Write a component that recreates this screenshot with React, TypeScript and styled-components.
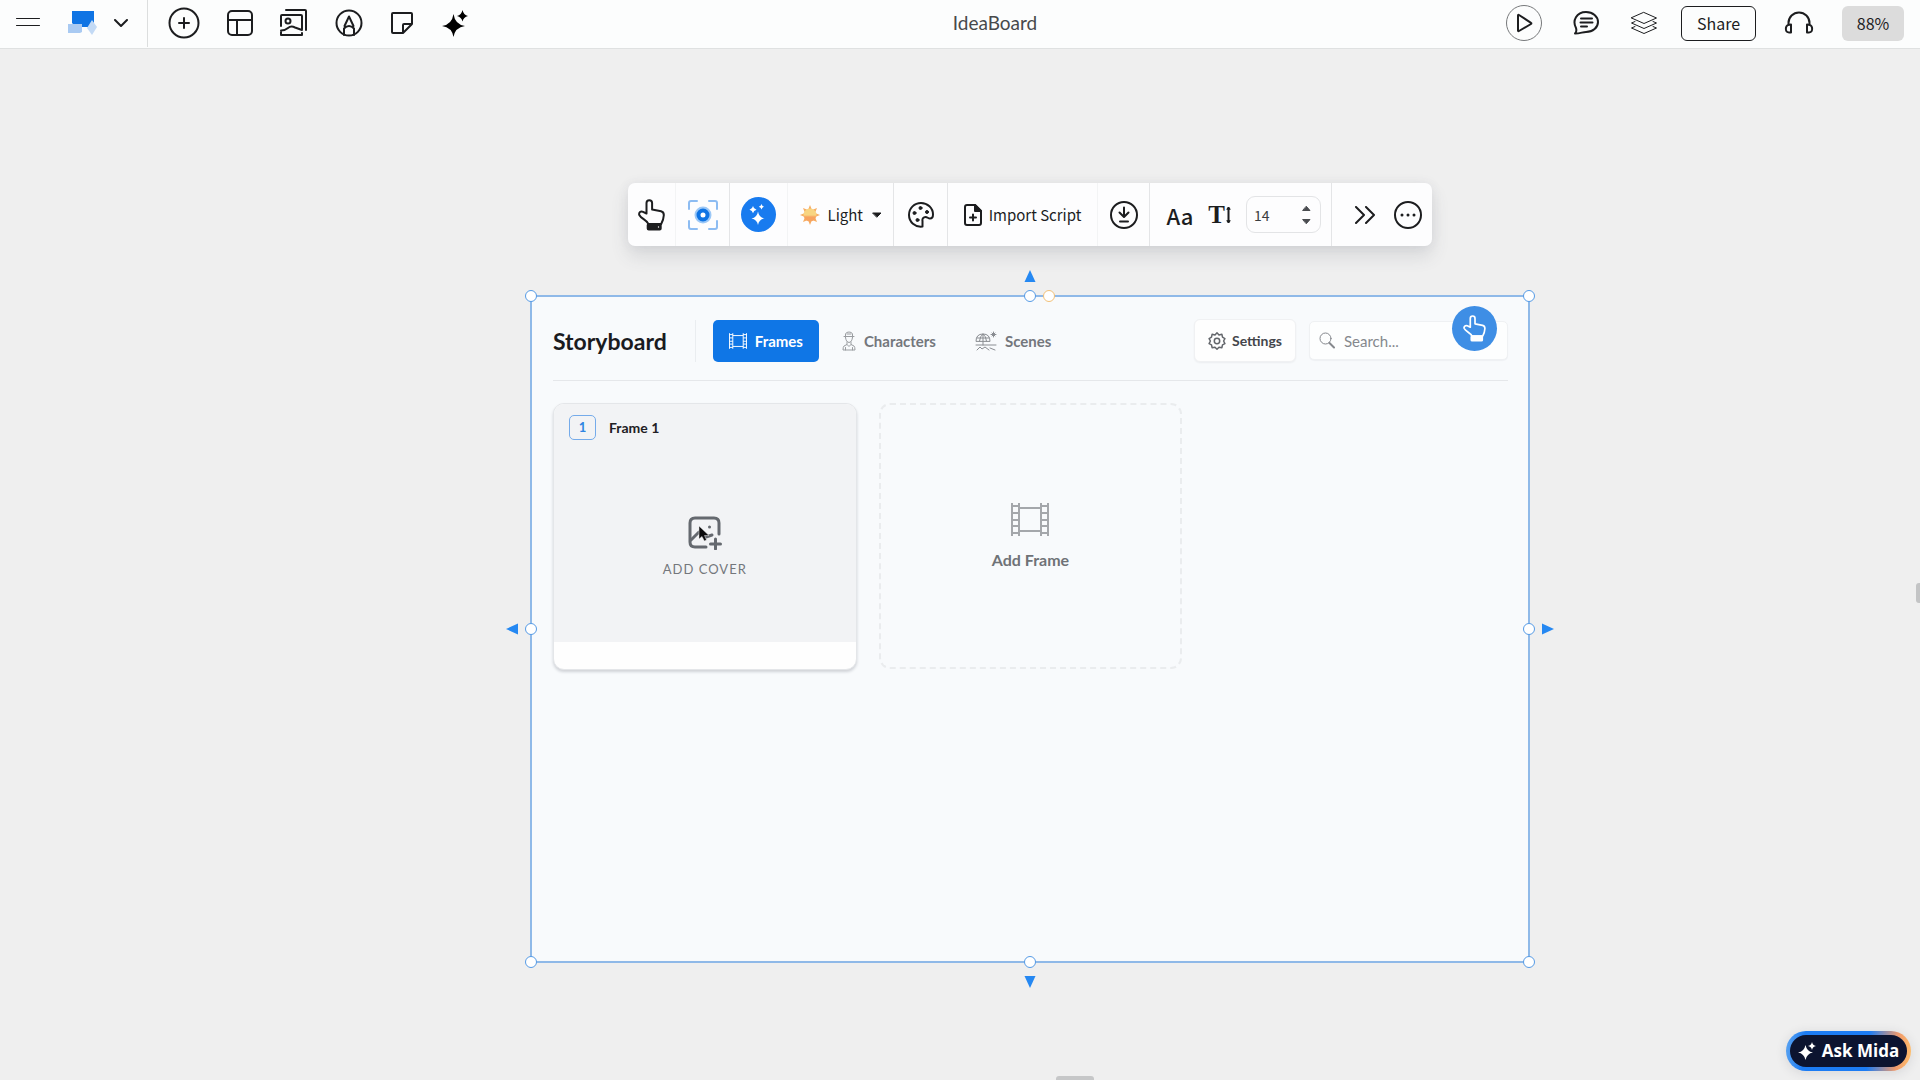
import React, { useState } from "react";
import styled, { createGlobalStyle } from "styled-components";

const uiFont = `"Noto Sans CJK SC", "Noto Sans", sans-serif`;
const boardFont = `Lato, "Open Sans", sans-serif`;

const GlobalStyle = createGlobalStyle`
  * {
    box-sizing: border-box;
  }
  body {
    margin: 0;
    background: #efefef;
    color: #1c1d1f;
    font-family: ${uiFont};
  }
  button, input, select {
    font: inherit;
    color: inherit;
  }
`;

const Page = styled.div`
  display: flex;
  flex-direction: column;
  height: 100vh;
  overflow: hidden;
`;

const TopBar = styled.header`
  display: flex;
  align-items: center;
  height: 49px;
  padding: 0 16px 2px 14px;
  background: #fcfdfd;
  border-bottom: 1px solid #dfe1e1;
`;

const BarSide = styled.div<{ $end?: boolean }>`
  display: flex;
  flex: 1;
  align-items: center;
  justify-content: ${(p) => (p.$end ? "flex-end" : "flex-start")};
  gap: ${(p) => (p.$end ? 23 : 20)}px;
`;

const BarGroup = styled.div<{ $gap: number }>`
  display: flex;
  align-items: center;
  gap: ${(p) => p.$gap}px;
`;

const BrandGroup = styled(BarGroup)`
  height: 48px;
  padding-right: 19px;
  border-right: 1px solid #dcdede;
`;

const IconButton = styled.button`
  display: flex;
  align-items: center;
  justify-content: center;
  flex: none;
  padding: 0;
  border: 0;
  background: none;
  cursor: pointer;
`;

const MenuButton = styled(IconButton)`
  justify-content: flex-start;
  width: 38px;
`;

const BoardTitle = styled.h1`
  margin: 0 0 0 72px;
  font-family: ${boardFont};
  font-size: 19px;
  font-weight: 400;
  line-height: 24px;
  color: #47494b;
`;

const PlayButton = styled(IconButton)`
  width: 36px;
  height: 36px;
  border: 1px solid #77797b;
  border-radius: 50%;
`;

const ShareButton = styled.button`
  width: 75px;
  height: 35px;
  padding: 0;
  border: 1px solid #1c1d1f;
  border-radius: 6px;
  background: #fcfdfd;
  font-size: 16px;
  line-height: 24px;
`;

const ZoomButton = styled.button`
  width: 62px;
  height: 35px;
  padding: 0;
  border: 0;
  border-radius: 6px;
  background: #dcdcdc;
  font-size: 16px;
  line-height: 24px;
`;

const Canvas = styled.main`
  position: relative;
  flex: 1;
  background: #efefef;
`;

const CanvasNode = styled.section`
  position: absolute;
  left: 530px;
  top: 134px;
  width: 1000px;
  display: flex;
  flex-direction: column;
  align-items: center;
  gap: 49px;
`;

const Toolbar = styled.div`
  display: flex;
  height: 63px;
  border-radius: 7px;
  background: #fdfdfe;
  box-shadow: 0 10px 18px rgba(70, 75, 95, 0.14), 0 0 12px rgba(70, 75, 95, 0.07);
`;

const ToolGroup = styled.div<{ $width: number; $gap?: number; $faint?: boolean; $end?: boolean }>`
  display: flex;
  align-items: center;
  justify-content: ${(p) => (p.$end ? "flex-end" : "center")};
  gap: ${(p) => p.$gap ?? 0}px;
  width: ${(p) => p.$width}px;
  padding-right: ${(p) => (p.$end ? 10 : 0)}px;
  border-right: 1px solid ${(p) => (p.$faint ? "#f3f4f5" : "#e4e5e7")};

  &:last-child {
    border-right: 0;
  }
`;

const AiButton = styled(IconButton)`
  width: 35px;
  height: 35px;
  border-radius: 50%;
  background: #187bef;
`;

const ThemeLabel = styled.label`
  display: flex;
  align-items: center;
  gap: 8px;
  font-size: 15px;
`;

const ThemeSelect = styled.select`
  appearance: none;
  width: 36px;
  padding: 0;
  border: 0;
  background: none;
  line-height: 24px;
`;

const ToolTextButton = styled(IconButton)`
  gap: 7px;
  font-size: 15px;
  line-height: 24px;
`;

const FontButton = styled(IconButton)`
  font-size: 22px;
  font-weight: 500;
  line-height: 28px;
`;

const SizeButton = styled(IconButton)`
  gap: 1px;
  font-family: "Liberation Serif", serif;
  font-size: 25px;
  font-weight: 700;
  line-height: 28px;
`;

const SizeField = styled.div`
  display: flex;
  align-items: center;
  justify-content: space-between;
  width: 75px;
  height: 37px;
  padding: 0 9px 0 7px;
  border: 1px solid #e3e4e6;
  border-radius: 9px;
`;

const SizeInput = styled.input`
  width: 36px;
  padding: 0;
  border: 0;
  outline: 0;
  background: none;
  font-size: 14px;
  line-height: 20px;
  color: #3b3d40;
`;

const Stepper = styled.div`
  display: flex;
  flex-direction: column;
  gap: 8px;
  color: #4a4c50;
`;

const Widget = styled.div`
  position: relative;
  width: 100%;
  height: 668px;
  padding: 22px 20px 22px 21px;
  border: 2px solid #8fb9e8;
  background: #f8fafc;
  font-family: ${boardFont};
`;

const WidgetHeader = styled.div`
  display: flex;
  align-items: center;
  justify-content: space-between;
  padding-bottom: 18px;
  border-bottom: 1px solid #e5e7ea;
`;

const WidgetTitle = styled.h2`
  margin: 0;
  padding-right: 28px;
  border-right: 1px solid #eaedf0;
  font-size: 23px;
  font-weight: 700;
  line-height: 42px;
  color: #1a1b1f;
`;

const Tabs = styled.nav`
  display: flex;
  align-items: center;
  gap: 7px;
  flex: 1;
  margin-left: 17px;
`;

const Tab = styled.button<{ $active?: boolean }>`
  display: flex;
  align-items: center;
  gap: 8px;
  height: 42px;
  padding: 0 16px;
  border: 0;
  border-radius: 5px;
  background: ${(p) => (p.$active ? "#0f76e6" : "transparent")};
  color: ${(p) => (p.$active ? "#ffffff" : "#74777c")};
  font-size: 15px;
  font-weight: 700;
  line-height: 20px;
`;

const SettingsButton = styled.button`
  display: flex;
  align-items: center;
  justify-content: center;
  gap: 6px;
  width: 102px;
  height: 43px;
  padding: 0;
  border: 1px solid #f0f1f3;
  border-radius: 6px;
  background: #fefefe;
  box-shadow: 0 1px 2px rgba(30, 35, 50, 0.06);
  font-size: 14px;
  font-weight: 700;
  line-height: 20px;
  color: #44464b;
`;

const SearchLabel = styled.label`
  display: flex;
  align-items: center;
  gap: 9px;
  width: 199px;
  height: 39px;
  margin-left: 13px;
  padding: 0 9px;
  border: 1px solid #eff1f3;
  border-radius: 5px;
  background: #fdfefe;
  box-shadow: 0 1px 1px rgba(30, 35, 50, 0.04);
`;

const SearchInput = styled.input`
  flex: 1;
  min-width: 0;
  padding: 0;
  border: 0;
  outline: 0;
  background: none;
  font-size: 15px;
  line-height: 20px;

  &::placeholder {
    color: #85888d;
    opacity: 1;
  }
`;

const HandBadge = styled(IconButton)`
  position: absolute;
  right: 31px;
  top: 9px;
  width: 45px;
  height: 45px;
  border-radius: 50%;
  background: #3e8ee5;
  color: #ffffff;
`;

const Cards = styled.div`
  display: grid;
  grid-template-columns: repeat(3, 1fr);
  gap: 22px;
  padding-top: 22px;
`;

const FrameCard = styled.article`
  display: flex;
  flex-direction: column;
  height: 267px;
  overflow: hidden;
  border: 1px solid #e4e6e9;
  border-radius: 11px;
  background: #fefefe;
  box-shadow: 0 2px 3px rgba(30, 35, 50, 0.18);
`;

const Cover = styled.div`
  display: flex;
  flex-direction: column;
  height: 238px;
  padding: 11px 15px;
  background: #f2f3f5;
`;

const FrameHead = styled.div`
  display: flex;
  align-items: center;
  gap: 13px;
`;

const FrameNumber = styled.span`
  width: 27px;
  height: 25px;
  border: 1px solid #75abea;
  border-radius: 5px;
  text-align: center;
  font-size: 13px;
  font-weight: 700;
  line-height: 22px;
  color: #2f85e2;
`;

const FrameName = styled.h3`
  margin: 0;
  font-size: 14px;
  font-weight: 700;
  line-height: 20px;
  color: #1f2024;
`;

const AddCover = styled.button`
  position: relative;
  display: flex;
  flex: 1;
  flex-direction: column;
  align-items: center;
  gap: 9px;
  padding: 76px 0 0;
  border: 0;
  background: none;
  font-size: 13px;
  letter-spacing: 1px;
  line-height: 20px;
  color: #74777c;
`;

const Pointer = styled.svg`
  position: absolute;
  left: calc(50% - 7px);
  top: 85px;
`;

const AddFrame = styled.button`
  display: flex;
  flex-direction: column;
  align-items: center;
  justify-content: center;
  gap: 14px;
  height: 266px;
  padding: 0;
  border: 2px dashed #eaecee;
  border-radius: 11px;
  background: none;
  font-size: 16px;
  font-weight: 700;
  line-height: 20px;
  color: #6f7277;
`;

const Handle = styled.span<{ $x: string; $y: string; $warm?: boolean }>`
  position: absolute;
  left: ${(p) => p.$x};
  top: ${(p) => p.$y};
  width: 12px;
  height: 12px;
  margin: -6px;
  border: 1px solid ${(p) => (p.$warm ? "#f2c179" : "#569be6")};
  border-radius: 50%;
  background: #ffffff;
`;

const Arrow = styled.svg<{ $x: string; $y: string; $turn: number }>`
  position: absolute;
  left: ${(p) => p.$x};
  top: ${(p) => p.$y};
  width: 12px;
  height: 12px;
  margin: -6px;
  transform: rotate(${(p) => p.$turn}deg);
  fill: #2588f2;
`;

const SideStub = styled.span`
  position: absolute;
  right: 0;
  top: 534px;
  width: 4px;
  height: 20px;
  border-radius: 3px 0 0 3px;
  background: #c3c4c5;
`;

const BottomStub = styled.span`
  position: absolute;
  left: 55%;
  bottom: 0;
  width: 38px;
  height: 4px;
  border-radius: 3px 3px 0 0;
  background: #c6c7c8;
`;

const AskMida = styled.button`
  position: absolute;
  right: 9px;
  bottom: 9px;
  display: flex;
  align-items: center;
  justify-content: center;
  gap: 6px;
  width: 125px;
  height: 40px;
  padding: 0;
  border: 4px solid transparent;
  border-radius: 20px;
  background: linear-gradient(#0c1430, #0c1430) padding-box,
    linear-gradient(95deg, #5ca4f0 0%, #1c7cf4 15%, #1c7cf4 65%, #f09a6c 88%, #ffc06a 100%) border-box;
  box-shadow: 0 2px 12px rgba(40, 45, 60, 0.12);
  font-family: "Open Sans", sans-serif;
  font-size: 17px;
  font-weight: 700;
  line-height: 24px;
  color: #ffffff;
`;

type IconProps = {
  w: number;
  h: number;
  sw?: number;
  color?: string;
  children: React.ReactNode;
};

const Icon: React.FC<IconProps> = ({ w, h, sw = 2, color = "currentColor", children }) => (
  <svg
    width={w}
    height={h}
    viewBox={`0 0 ${w} ${h}`}
    fill="none"
    stroke={color}
    strokeWidth={sw}
    strokeLinecap="round"
    strokeLinejoin="round"
    aria-hidden="true"
  >
    {children}
  </svg>
);

const HandIcon = ({ w = 27, h = 32 }) => (
  <svg width={w} height={h} viewBox="0 0 27 32" fill="none" stroke="currentColor" strokeWidth="2" strokeLinejoin="round">
    <path d="M8.5 13V4a2.8 2.8 0 0 1 5.6 0v6.5l9 1.8q2.900.8 2.700 4-.2 4.500-2.600 8.700H10.500C9 21 3 19.500 1.300 16c-.8-2.500 1.500-4.200 3.700-3.200l3.500 1.700z" />
    <rect x="9.700" y="25" width="13" height="5.500" rx="1" fill="currentColor" />
    <circle cx="20.500" cy="28" r="0.700" fill="#fff" stroke="none" />
  </svg>
);

const FilmIcon: React.FC<{ w: number; h: number; color?: string }> = ({ w, h, color = "currentColor" }) => (
  <svg width={w} height={h} viewBox="0 0 38 33" fill="none" stroke={color} strokeWidth="2">
    <path d="M1 0v33M8 0v33M30 0v33M37 0v33M8 5h22M8 28h22" />
    <path d="M1 3h7M1 10h7M1 17h7M1 23h7M1 30h7M30 3h7M30 10h7M30 17h7M30 23h7M30 30h7" />
  </svg>
);

const LeftTools: React.FC = () => (
  <BarSide>
    <BrandGroup $gap={16}>
      <MenuButton aria-label="Menu">
        <Icon w={28} h={14} sw={1}>
          <path d="M2.5 2.5h23M2.5 9.5h23" />
        </Icon>
      </MenuButton>
      <IconButton aria-label="Home">
        <Icon w={30} h={24} sw={0}>
          <path d="M4 0h22v16H8l-4-4z" fill="#0f74e4" />
          <path d="M0 13h14v8l-2 1H0z" fill="#a9caf2" />
          <path d="m24 9 5 7-5 8-5-7z" fill="#c3daf5" />
        </Icon>
      </IconButton>
      <IconButton aria-label="Boards">
        <Icon w={14} h={9}>
          <path d="m1 1 6 6 6-6" />
        </Icon>
      </IconButton>
    </BrandGroup>
    <BarGroup $gap={27}>
      <IconButton aria-label="Add">
        <Icon w={32} h={32}>
          <circle cx="16" cy="16" r="14.5" />
          <path d="M16 11v10M11 16h10" />
        </Icon>
      </IconButton>
      <IconButton aria-label="Templates">
        <Icon w={26} h={26}>
          <rect x="1" y="1" width="24" height="24" rx="4" />
          <path d="M1 10h24M10 10v15" />
        </Icon>
      </IconButton>
      <IconButton aria-label="Images">
        <Icon w={28} h={28}>
          <path d="M1 17V7q0-1 1-1h19q1 0 1 1v13" />
          <path d="M6 1h19q1 0 1 1v19" />
          <path d="M1 21.500q4 0 7-2.500t7-.5l7 2.500M1 23v3h21v-2" />
          <circle cx="8" cy="12" r="2.5" />
        </Icon>
      </IconButton>
      <IconButton aria-label="Draw">
        <Icon w={28} h={28}>
          <circle cx="14" cy="14" r="12.5" />
          <path d="m9.500 17 4.500-9.500 4.500 9.500M9 26v-6.500q5-5 10 0V26" />
        </Icon>
      </IconButton>
      <IconButton aria-label="Sticky note">
        <Icon w={24} h={24}>
          <path d="M12 22H3q-1 0-1-1V3q0-1 1-1h18q1 0 1 1v10l-9 9v-8q0-1 1-1h8" />
        </Icon>
      </IconButton>
      <IconButton aria-label="AI">
        <Icon w={28} h={28} sw={0}>
          <path
            fill="#000"
            d="M12.5 5Q14 15.500 24 17 14 18.500 12.500 28 11 18.500 1 17 11 15.500 12.500 5zM21.500 1q1 5 5.500 6-4.500 1-5.500 5.500-1-4.500-5.500-5.500 4.500-1 5.500-6z"
          />
        </Icon>
      </IconButton>
    </BarGroup>
  </BarSide>
);

const RightTools: React.FC = () => (
  <BarSide $end>
    <BarGroup $gap={30}>
      <PlayButton aria-label="Present">
        <Icon w={18} h={20}>
          <path d="M3 2.500v15c0 .6.500.8 1 .5l12-7c.5-.3.500-.9 0-1.200L4 2c-.5-.3-1 0-1 .5z" />
        </Icon>
      </PlayButton>
      <IconButton aria-label="Comments">
        <Icon w={28} h={26}>
          <path d="M4 18C0 10.500 4.500 2 14 2c7 0 12 4.500 12 10s-5 10-12 10c-3.500 0-5.500 1.500-11 1.500 1.500-1.500 1.600-3.500 1-5.500z" />
          <path d="M9 8.500h11M8.500 12.500h12M9 16.500h6" />
        </Icon>
      </IconButton>
      <IconButton aria-label="Layers">
        <Icon w={28} h={24} sw={1}>
          <path d="M14 1.500 26.500 7 14 12.500 1.500 7z" />
          <path d="M5 10.500 1.500 12 14 17.500 26.500 12 23 10.500M5 15.500 1.500 17 14 22.500 26.500 17 23 15.500" />
        </Icon>
      </IconButton>
    </BarGroup>
    <BarGroup $gap={28}>
      <ShareButton>Share</ShareButton>
      <IconButton aria-label="Audio">
        <Icon w={30} h={24}>
          <path d="M4.500 13V12a10.500 10.500 0 0 1 21 0v1" />
          <path d="M7 13.500v8H5c-3 0-3.500-2.500-3-5s2-3 5-3zM23 13.500v8h2c3 0 3.500-2.500 3-5s-2-3-5-3z" />
        </Icon>
      </IconButton>
      <ZoomButton>88%</ZoomButton>
    </BarGroup>
  </BarSide>
);

const handles = [
  ["-1px", "-1px"],
  ["50%", "-1px"],
  ["calc(100% + 1px)", "-1px"],
  ["-1px", "50%"],
  ["calc(100% + 1px)", "50%"],
  ["-1px", "calc(100% + 1px)"],
  ["50%", "calc(100% + 1px)"],
  ["calc(100% + 1px)", "calc(100% + 1px)"],
];

const arrows = [
  { x: "50%", y: "-21px", turn: 0 },
  { x: "50%", y: "calc(100% + 21px)", turn: 180 },
  { x: "-20px", y: "50%", turn: 270 },
  { x: "calc(100% + 20px)", y: "50%", turn: 90 },
];

const App: React.FC = () => {
  const [fontSize, setFontSize] = useState(14);
  const [tab, setTab] = useState("Frames");

  return (
    <Page>
      <GlobalStyle />
      <TopBar>
        <LeftTools />
        <BoardTitle>IdeaBoard</BoardTitle>
        <RightTools />
      </TopBar>

      <Canvas>
        <CanvasNode>
          <Toolbar role="toolbar" aria-label="Storyboard tools">
            <ToolGroup $width={48} $faint>
              <IconButton aria-label="Interact">
                <HandIcon />
              </IconButton>
            </ToolGroup>
            <ToolGroup $width={54}>
              <IconButton aria-label="Focus">
                <Icon w={30} h={30} color="#8dbcf2">
                  <path d="M1 9V3q0-2 2-2h6M21 1h6q2 0 2 2v6M29 21v6q0 2-2 2h-6M9 29H3q-2 0-2-2v-6" />
                  <circle cx="15" cy="15" r="8.5" fill="#9cc8f7" stroke="none" />
                  <circle cx="15" cy="15" r="4.5" fill="#fff" stroke="#0f74e4" strokeWidth="4" />
                </Icon>
              </IconButton>
            </ToolGroup>
            <ToolGroup $width={58} $faint>
              <AiButton aria-label="AI actions">
                <Icon w={35} h={35} sw={0}>
                  <path
                    fill="#fff"
                    d="M17 14.500q1 6 6.500 7-5.500 1-6.500 6.500-1-5.500-6.500-6.500 5.500-1 6.500-7zM12 9q.6 3 3.500 3.700-2.900.6-3.500 3.500-.6-2.900-3.500-3.500Q11.400 12 12 9zM20.500 7q.5 2.300 2.700 2.800-2.200.5-2.700 2.700-.5-2.200-2.700-2.700 2.200-.5 2.700-2.800z"
                  />
                </Icon>
              </AiButton>
            </ToolGroup>
            <ToolGroup $width={106}>
              <ThemeLabel>
                <Icon w={20} h={20} sw={0}>
                  <defs>
                    <linearGradient id="sun" gradientUnits="userSpaceOnUse" x1="0" y1="0" x2="0" y2="20">
                      <stop offset="0.5" stopColor="#f8d581" />
                      <stop offset="0.6" stopColor="#f7a35f" />
                    </linearGradient>
                  </defs>
                  <path fill="#f7ad62" d="m10 0 2 5h-4zM10 20l2-5h-4zM0 10l5-2v4zM20 10l-5-2v4zM3 3l5 2-3 3zM17 3l-5 2 3 3zM3 17l5-2-3-3zM17 17l-5-2 3-3z" />
                  <circle cx="10" cy="10" r="6.5" fill="url(#sun)" />
                </Icon>
                <ThemeSelect aria-label="Theme" defaultValue="Light">
                  <option>Light</option>
                  <option>Dark</option>
                </ThemeSelect>
                <Icon w={10} h={6} sw={1}>
                  <path d="M1 1h8L5 5z" fill="currentColor" />
                </Icon>
              </ThemeLabel>
            </ToolGroup>
            <ToolGroup $width={54}>
              <IconButton aria-label="Colors">
                <Icon w={26} h={26}>
                  <path d="M14.500 24.500C7 25.500 1 20 1 13S6.500 1 13 1s12 5 12 11.500c0 3-1.500 4-3 4-2 0-2.500-1.500-4.500-1.500s-3.500 1.700-3 4z" />
                  <circle cx="6.5" cy="11" r="1.5" fill="currentColor" strokeWidth="1" />
                  <circle cx="12.5" cy="6" r="1.5" fill="currentColor" strokeWidth="1" />
                  <circle cx="19" cy="10" r="1.5" fill="currentColor" strokeWidth="1" />
                  <circle cx="9.5" cy="18" r="1.5" fill="currentColor" strokeWidth="1" />
                </Icon>
              </IconButton>
            </ToolGroup>
            <ToolGroup $width={150} $faint>
              <ToolTextButton>
                <Icon w={18} h={22}>
                  <path d="M11 1H3Q1 1 1 3v16q0 2 2 2h12q2 0 2-2V7z" />
                  <path d="M11 1v6h6z" fill="currentColor" />
                  <path d="M9 10.500v6M6 13.500h6" />
                </Icon>
                Import Script
              </ToolTextButton>
            </ToolGroup>
            <ToolGroup $width={52}>
              <IconButton aria-label="Download">
                <Icon w={28} h={28}>
                  <circle cx="14" cy="14" r="13" />
                  <path d="M14 6.500v9M9.500 11.500 14 16l4.500-4.500M10 20.500h8" />
                </Icon>
              </IconButton>
            </ToolGroup>
            <ToolGroup $width={182} $gap={15} $end>
              <FontButton aria-label="Font">Aa</FontButton>
              <SizeButton aria-label="Text size">
                T
                <Icon w={5} h={18} sw={1}>
                  <path d="M2.500 2v14" strokeWidth="2" />
                  <path d="M1 3 2.500 1 4 3zM1 15l1.500 2L4 15z" fill="currentColor" />
                </Icon>
              </SizeButton>
              <SizeField>
                <SizeInput
                  aria-label="Font size"
                  inputMode="numeric"
                  value={fontSize}
                  onChange={(e) => setFontSize(Number(e.target.value) || 0)}
                />
                <Stepper>
                  <IconButton aria-label="Increase" onClick={() => setFontSize(fontSize + 1)}>
                    <Icon w={9} h={5} sw={1}>
                      <path d="M1 4.500h7l-3.500-4z" fill="currentColor" />
                    </Icon>
                  </IconButton>
                  <IconButton aria-label="Decrease" onClick={() => setFontSize(fontSize - 1)}>
                    <Icon w={9} h={5} sw={1}>
                      <path d="M1 .5h7l-3.500 4z" fill="currentColor" />
                    </Icon>
                  </IconButton>
                </Stepper>
              </SizeField>
            </ToolGroup>
            <ToolGroup $width={100} $gap={18} $end>
              <IconButton aria-label="Expand">
                <Icon w={22} h={18}>
                  <path d="m2 1 8 8-8 8M12 1l8 8-8 8" />
                </Icon>
              </IconButton>
              <IconButton aria-label="More">
                <Icon w={28} h={28}>
                  <circle cx="14" cy="14" r="13" />
                  <path d="M8 14h.01M14 14h.01M20 14h.01" strokeWidth="3" />
                </Icon>
              </IconButton>
            </ToolGroup>
          </Toolbar>

          <Widget>
            <WidgetHeader>
              <WidgetTitle>Storyboard</WidgetTitle>
              <Tabs>
                <Tab $active={tab === "Frames"} onClick={() => setTab("Frames")}>
                  <FilmIcon w={18} h={16} />
                  Frames
                </Tab>
                <Tab $active={tab === "Characters"} onClick={() => setTab("Characters")}>
                  <Icon w={14} h={20} sw={1} color="#9a9da1">
                    <path d="M3.500 6.500V3Q4 1 7 1t3.500 2v3.500M2 5.500h10M3.500 6.500Q4 11 7 11.500q3-.5 3.500-5" />
                    <path d="M5 11v2.500l-3 1.500q-1 1-1 4h12q0-3-1-4l-3-1.500V11M5 13.500l2 2 2-2M3.500 16.500V19M10.500 16.500V19M5 3h4" />
                  </Icon>
                  Characters
                </Tab>
                <Tab $active={tab === "Scenes"} onClick={() => setTab("Scenes")}>
                  <Icon w={22} h={20} sw={1} color="#8a8d92">
                    <path d="M1 10q0-7 7-7t7 7zM4.500 10Q5 5 8 3q3 2 3.500 7M8 3v11M2 7h12M1 14h20" />
                    <path d="m2 19 3-3 2 2 3-2 4 3M15 17l5 2M18.500 1v5M16 3.500h5M17 2l3 3M20 2l-3 3" />
                  </Icon>
                  Scenes
                </Tab>
              </Tabs>
              <SettingsButton>
                <Icon w={18} h={18} color="#63666b">
                  <path
                    d="m9 .8 2 2.100 2.900-.6.6 2.900 2.400 1.400L15.600 9l1.300 2.600-2.400 1.200-.6 2.900-2.900-.5L9 17.200l-2-2-2.900.5-.6-2.900-2.400-1.200L2.400 9 1.100 6.600l2.400-1.400.6-2.900 2.900.6z"
                    strokeWidth="1.5"
                  />
                  <circle cx="9" cy="9" r="2.7" strokeWidth="1.5" />
                </Icon>
                Settings
              </SettingsButton>
              <SearchLabel>
                <Icon w={16} h={17} sw={1} color="#85888d">
                  <circle cx="6.5" cy="6.5" r="5.5" />
                  <path d="m10.500 11 4.500 4.500" strokeWidth="2" />
                </Icon>
                <SearchInput aria-label="Search" placeholder="Search..." />
              </SearchLabel>
            </WidgetHeader>

            <Cards>
              <FrameCard>
                <Cover>
                  <FrameHead>
                    <FrameNumber>1</FrameNumber>
                    <FrameName>Frame 1</FrameName>
                  </FrameHead>
                  <AddCover>
                    <Icon w={34} h={34} sw={3} color="#65696f">
                      <path d="M18 31H7q-5 0-5-5V7q0-5 5-5h19q5 0 5 5v11" />
                      <path d="m3 24 8-8 4 4 3 1 6-2" />
                      <path d="M21.500 11h.01M27.500 23v10M22.500 28h10" />
                    </Icon>
                    ADD COVER
                    <Pointer width="12" height="17" viewBox="0 0 12 17">
                      <path d="M1 1v13l3-2.600L6.300 16l2.200-1-2-4.500H11z" fill="#0b0b0d" stroke="#e8e9eb" strokeWidth="0.5" />
                    </Pointer>
                  </AddCover>
                </Cover>
              </FrameCard>
              <AddFrame>
                <FilmIcon w={38} h={33} color="#a4a7ab" />
                Add Frame
              </AddFrame>
            </Cards>

            <HandBadge aria-label="Interaction mode">
              <HandIcon w={23} h={27} />
            </HandBadge>
            {handles.map(([x, y]) => (
              <Handle key={x + y} $x={x} $y={y} />
            ))}
            <Handle $x="calc(50% + 19px)" $y="-1px" $warm />
            {arrows.map((a) => (
              <Arrow key={a.turn} $x={a.x} $y={a.y} $turn={a.turn} viewBox="0 0 12 12">
                <path d="M6 0l5.500 12H.5z" />
              </Arrow>
            ))}
          </Widget>
        </CanvasNode>

        <SideStub />
        <BottomStub />
        <AskMida>
          <Icon w={18} h={18} sw={0}>
            <path
              fill="#fff"
              d="M7.500 3q1.300 6.500 7.500 7.500-6.200 1-7.500 7.500Q6.200 11.500 0 10.500 6.200 9.500 7.500 3zM14 0q.7 3.300 4 4-3.300.7-4 4-.7-3.300-4-4 3.300-.7 4-4z"
            />
          </Icon>
          Ask Mida
        </AskMida>
      </Canvas>
    </Page>
  );
};

export default App;
